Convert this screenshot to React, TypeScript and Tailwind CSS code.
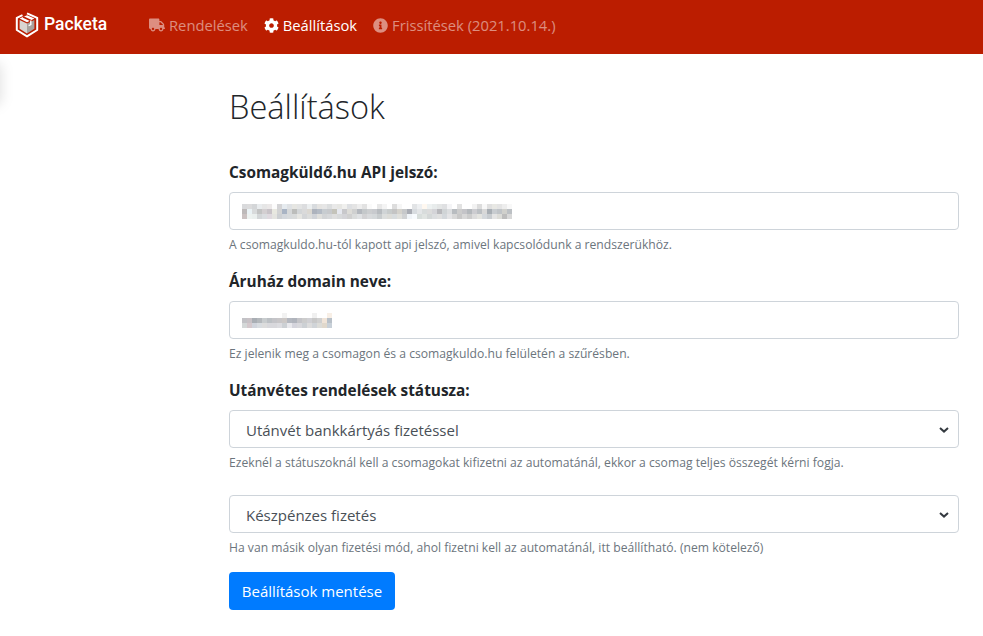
import React from 'react';
import { FaTruck, FaCog, FaInfoCircle } from 'react-icons/fa';

const Logo = () => (
  <svg width="24" height="26" viewBox="0 0 24 26" fill="none">
    <path d="M7.5 3.2 L1.8 5.8 L1.8 18 L12 24.4 L22.2 18 L22.2 5.8 L12 1.4" stroke="#fff" strokeWidth="2" strokeLinejoin="round" />
    <path d="M12 11.5 L4.6 8 L4.6 16.8 L12 21.4 Z" fill="#d9d5d2" />
    <path d="M12 11.5 L19.4 8 L19.4 16.8 L12 21.4 Z" fill="#a8a29e" />
    <path d="M4.6 6.6 L12 3.2 L19.4 6.6 L12 10.2 Z" fill="#fff" />
    <path d="M8.2 4.9 L15.8 8.4" stroke="#bb1d00" strokeWidth="1.6" />
    <path d="M15.8 8.4 L15.8 12.6 L13.6 13.6" stroke="#fff" strokeWidth="1.4" />
  </svg>
);

const Mosaic = ({ rows }: { rows: string[][] }) => (
  <svg width={rows[0].length * 5} height="15" viewBox={`0 0 ${rows[0].length * 5} 15`} shapeRendering="crispEdges">
    {rows.map((row, y) =>
      row.map((c, x) => <rect key={`${x}-${y}`} x={x * 5} y={y * 5} width="5" height="5" fill={c} />),
    )}
  </svg>
);

const apiKeyRows = [
  ['#d9dadc', '#dcdcdd', '#d4d6d8', '#e9ecee', '#e6e6e6', '#ebe8e8', '#fcfcfc', '#d4d4d6', '#e6ebef', '#dfe2e5', '#e6e6e2', '#e3e4e4', '#dcdddf', '#eceff0', '#d8dbde', '#e5e4e2', '#e6e6e6', '#dcdedf', '#e9e9e9', '#e7e7e4', '#f0f0ee', '#dee0e3', '#e4e4e4', '#eeeeee', '#e2e2e2', '#fafafa', '#ffffff', '#e8e8e8', '#f4f4f4', '#ffffff', '#dddddd', '#f6f6f6', '#ffffff', '#ffffff', '#e2e4e6', '#eef0f2', '#fff8f0', '#eef2f2', '#e8ecec', '#e4e6e6', '#dfe0e2', '#f4f4f6', '#ffffff', '#e2e2e2', '#ffffff', '#ffffff', '#f2f2f2', '#dcdcdc', '#f8f8f8', '#e0e0e0', '#e8e8e4', '#e4e4e4', '#ededed', '#f8f8f8'],
  ['#bdb9b9', '#eaf2f5', '#d8dadb', '#c2c3c3', '#d3cfd1', '#c8c3c8', '#e8e8e0', '#d2d3d4', '#a9b4c4', '#d6d8d9', '#bcbdbb', '#d3d6d8', '#dadada', '#dbd8d2', '#adb3bd', '#b4bbc5', '#c7ccd0', '#c7c9cc', '#c4c3ba', '#e6e8ef', '#c8c8cb', '#dddcd8', '#cfd0d0', '#b4b8be', '#c4c8ca', '#ccced0', '#c8cace', '#b8bcc0', '#d0d4d6', '#c8cccc', '#c4c4c4', '#d4d2cc', '#c6c8ca', '#a9acb4', '#d8dce0', '#e4e6e8', '#d8dcdc', '#dcdcdc', '#d4d4d8', '#b8b8bc', '#d0d4d6', '#dcdee0', '#b8bcc0', '#cccccc', '#c4c4c8', '#b4b8bc', '#ccccd0', '#bcc0c4', '#d8d8d8', '#a8aeb4', '#c8ccd0', '#c0c4c8', '#d0d0cc', '#bcc0c4'],
  ['#cbc2c2', '#edf2f0', '#eaefee', '#d3d6d8', '#dadde0', '#dfd9df', '#e4e4e0', '#cdd0d3', '#d3d7dc', '#d7dadc', '#d9dbdb', '#e6e6e2', '#d4d6d8', '#dcdddc', '#d0d3d8', '#dfdfdc', '#d2d4d6', '#d6d8da', '#dedede', '#d8dadb', '#d4d4d8', '#d0d0d0', '#dadcdc', '#e0e2e4', '#d2d2d4', '#d8dadc', '#d4d8da', '#c8ccce', '#dcdedd', '#dcdcd8', '#d8dcde', '#e0e0dc', '#d0d2d4', '#f0f4f8', '#f8fbfe', '#d8dedc', '#e0e4e2', '#d4d8d8', '#dcdee0', '#e0e0e0', '#d4d8dc', '#e4e4e6', '#d8d8d8', '#c8c8c8', '#d8d8d8', '#cccccc', '#dcdcdc', '#e4e4e0', '#d4d8dc', '#c8ccd0', '#e4e4e4', '#dcdcd8', '#bdbdbd', '#d8d8d8'],
];

const domainRows = [
  ['#ffffff', '#ffffff', '#ffffff', '#ffffff', '#ffffff', '#ffffff', '#ffffff', '#ffffff', '#f2f2f2', '#ffffff', '#ffffff', '#ffffff', '#ffffff', '#ffffff', '#f0f0f0', '#ffffff', '#ffffff', '#f8efe6'],
  ['#c2c2c6', '#c8c2c6', '#a9aeb4', '#b4b8bc', '#c8ccce', '#bcc0c4', '#c4c4c8', '#c8c6c8', '#ccc8c6', '#b4b8c0', '#b0b4bc', '#c4c4c8', '#cccccc', '#d0d0d4', '#c8c8c8', '#d0d0d0', '#f0e4d8', '#b8c0c8'],
  ['#d4d8d8', '#d4c8cc', '#d0d4dc', '#d8dce0', '#dcdcdc', '#d8d8dc', '#d8d8dc', '#dcdce0', '#ccd0d4', '#e8e8ec', '#d4d4dc', '#d8d8dc', '#ccd0d4', '#dcdcdc', '#d0d4d8', '#dcdcd8', '#e0d8cc', '#c8d0d8'],
];

const Chevron = () => (
  <svg width="10" height="6" viewBox="0 0 10 6" className="absolute right-[9px] top-[16px]">
    <path d="M1 1 L5 4.6 L9 1" stroke="#343a40" strokeWidth="2" fill="none" />
  </svg>
);

const inputBox = 'relative flex h-[38px] items-center rounded border border-[#ced4da] bg-white px-3 text-[#495057]';
const selectBox = 'pl-4 pt-[2px] text-[15px]';
const labelText = 'block text-[15.35px] font-bold leading-6';
const helpText = 'mt-[5px] text-[12.15px] leading-[19px] text-[#6c757d]';

const App: React.FC = () => {
  return (
    <div className="relative min-h-[636px] overflow-hidden bg-white font-['Open_Sans','Noto_Sans',sans-serif] text-[#212529]">
      <div className="absolute left-[-14px] top-[62px] h-[44px] w-[16px] rounded-full bg-black/10 blur-[6px]" />
      <nav className="flex h-[54px] items-center bg-[#bb1d00] pb-[4px] pl-[15px] text-[14.75px]">
        <div className="flex w-[134px] items-center gap-[5px]">
          <Logo />
          <span className="font-['Roboto',sans-serif] text-[17.5px] font-medium leading-none text-white">Packeta</span>
        </div>
        <a className="flex items-center gap-[4px] text-white/50">
          <FaTruck size={16} />
          Rendelések
        </a>
        <a className="ml-4 flex items-center gap-[4px] text-white">
          <FaCog size={15} />
          Beállítások
        </a>
        <a className="ml-4 flex items-center gap-[4px] text-white/50">
          <FaInfoCircle size={15} />
          Frissítések (2021.10.14.)
        </a>
      </nav>
      <main className="pl-[229px] pr-[24px]">
        <h1 className="mt-[29px] text-[32.6px] font-light leading-[48px]">Beállítások</h1>
        <label className={`mt-[29px] ${labelText}`}>Csomagküldő.hu API jelszó:</label>
        <div className={`${inputBox} mt-[8px]`}>
          <Mosaic rows={apiKeyRows} />
        </div>
        <p className={helpText}>
          A csomagkuldo.hu-tól kapott api jelszó, amivel kapcsolódunk a rendszerükhöz.
        </p>
        <label className={`mt-[15px] ${labelText}`}>Áruház domain neve:</label>
        <div className={`${inputBox} mt-[8px]`}>
          <Mosaic rows={domainRows} />
        </div>
        <p className={helpText}>
          Ez jelenik meg a csomagon és a csomagkuldo.hu felületén a szűrésben.
        </p>
        <label className={`mt-[15px] ${labelText}`}>Utánvétes rendelések státusza:</label>
        <div className={`${inputBox} ${selectBox} mt-[8px]`}>
          Utánvét bankkártyás fizetéssel
          <Chevron />
        </div>
        <p className={helpText}>
          Ezeknél a státuszoknál kell a csomagokat kifizetni az automatánál, ekkor a csomag teljes összegét kérni fogja.
        </p>
        <div className={`${inputBox} ${selectBox} mt-[23px]`}>
          Készpénzes fizetés
          <Chevron />
        </div>
        <p className={helpText}>
          Ha van másik olyan fizetési mód, ahol fizetni kell az automatánál, itt beállítható. (nem kötelező)
        </p>
        <button className="mt-[15px] h-[38px] w-[166px] rounded bg-[#007bff] text-[15px] text-white">
          Beállítások mentése
        </button>
      </main>
    </div>
  );
};

export default App;
